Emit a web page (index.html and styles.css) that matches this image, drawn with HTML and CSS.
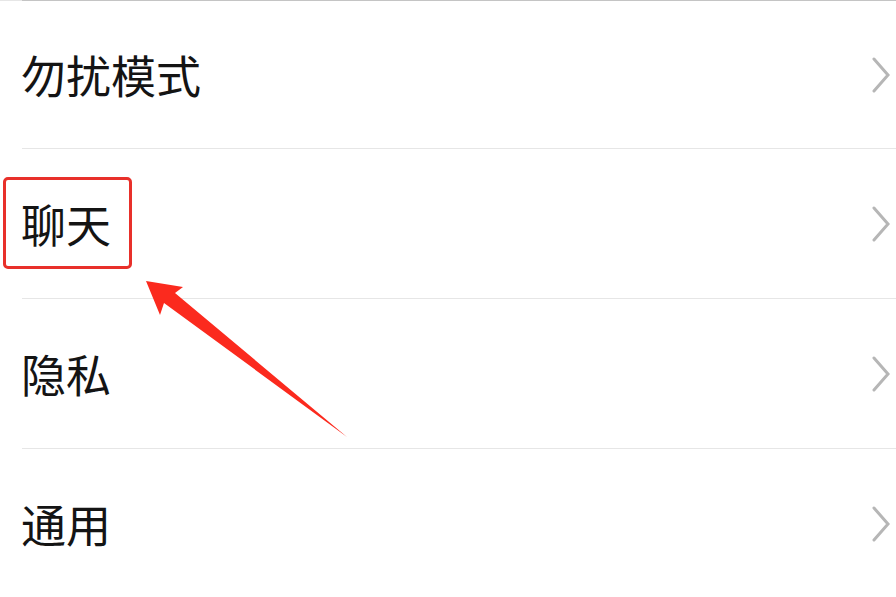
FILE: index.html
```html
<!DOCTYPE html>
<html lang="zh">
<head>
<meta charset="utf-8">
<link rel="stylesheet" href="styles.css">
</head>
<body>
<div class="page">
  <div class="topline"></div>
  <div class="list">
    <div class="row row-first">
      <span class="label">勿扰模式</span>
      <svg class="chev" viewBox="0 0 20 36" width="20" height="36"><polyline points="3,2 17,18 3,34" /></svg>
    </div>
    <div class="row">
      <span class="label">聊天</span>
      <svg class="chev" viewBox="0 0 20 36" width="20" height="36"><polyline points="3,2 17,18 3,34" /></svg>
    </div>
    <div class="row">
      <span class="label">隐私</span>
      <svg class="chev" viewBox="0 0 20 36" width="20" height="36"><polyline points="3,2 17,18 3,34" /></svg>
    </div>
    <div class="row row-last">
      <span class="label">通用</span>
      <svg class="chev" viewBox="0 0 20 36" width="20" height="36"><polyline points="3,2 17,18 3,34" /></svg>
    </div>
  </div>
  <div class="highlight"></div>
  <svg class="arrow" viewBox="0 0 896 597" width="896" height="597">
    <polygon points="146,281 183,287 175,293 347,437 164,303 160,315" />
  </svg>
</div>
</body>
</html>
```

FILE: styles.css
```css
html, body {
  margin: 0;
  padding: 0;
  background: #ffffff;
}
.page {
  position: relative;
  width: 896px;
  height: 597px;
  overflow: hidden;
  background: #ffffff;
  font-family: "Noto Sans CJK SC", "Noto Sans", sans-serif;
}
.topline {
  height: 1px;
  background: linear-gradient(to right, #e6e6e6 0, #e6e6e6 22px, #c4c4c4 22px);
}
.list {
  display: flex;
  flex-direction: column;
  margin-left: 22px;
}
.row {
  height: 149px;
  display: flex;
  align-items: center;
  justify-content: space-between;
  border-bottom: 1px solid #e6e6e6;
  padding-right: 5px;
}
.row-first {
  height: 147px;
}
.row-last {
  border-bottom: none;
}
.label {
  font-size: 45px;
  line-height: 1;
  color: #141414;
  letter-spacing: 0;
  margin-left: -1px;
}
.chev polyline {
  fill: none;
  stroke: #b6b6b6;
  stroke-width: 3;
  stroke-linecap: round;
  stroke-linejoin: miter;
}
.highlight {
  position: absolute;
  left: 3px;
  top: 177px;
  width: 123px;
  height: 86px;
  border: 3px solid #e8302a;
  border-radius: 5px;
}
.arrow {
  position: absolute;
  left: 0;
  top: 0;
}
.arrow polygon {
  fill: #fb2a1e;
}
```
